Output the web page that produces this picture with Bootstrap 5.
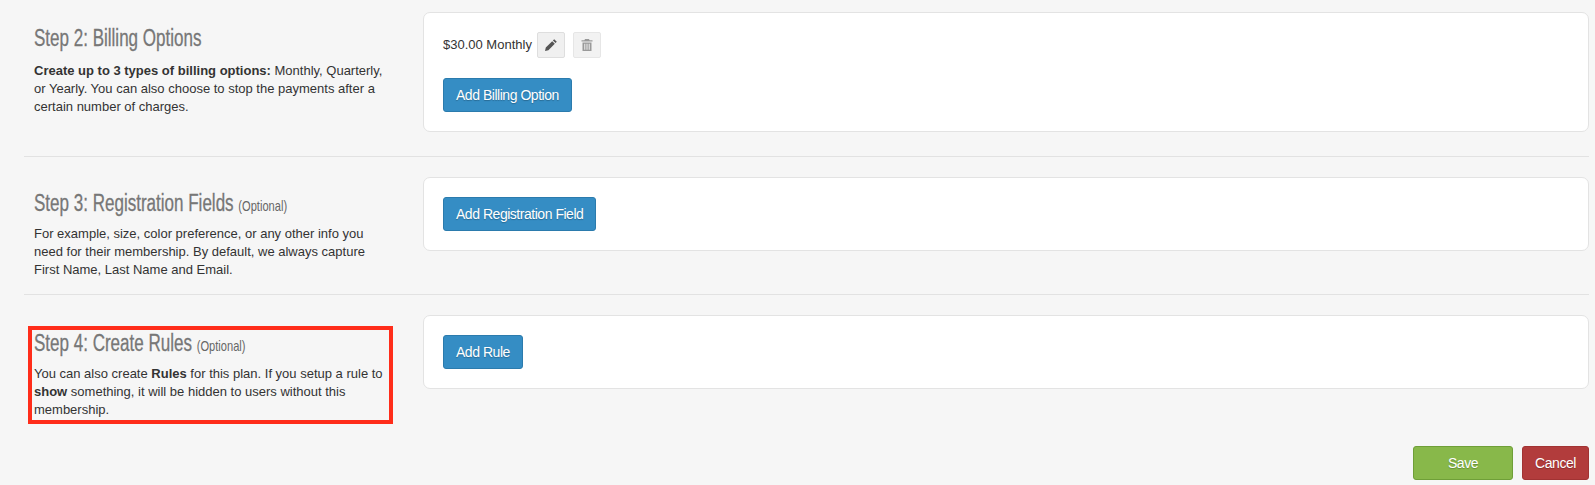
<!DOCTYPE html>
<html lang="en">
<head>
<meta charset="utf-8">
<title>Plan steps</title>
<link href="https://cdn.jsdelivr.net/npm/bootstrap@5.3.0/dist/css/bootstrap.min.css" rel="stylesheet">
<style>
body{background:#f6f6f6;color:#333;font-family:"Liberation Sans",Arial,sans-serif;font-size:13px;line-height:18px}
.page-wrap{padding:12px 6px 0 24px}
.step-info{width:399px;flex:none;padding:14px 37px 14px 10px}
.step-info p{margin:0}
.step-info.tight{padding-bottom:15px}
.step-title{font-family:"Liberation Sans",sans-serif;font-size:23px;line-height:24px;height:24px;color:#777;margin:0 0 12px;font-weight:400;white-space:nowrap;transform:scaleX(.74);transform-origin:left center;-webkit-text-stroke:.3px #777}
.tight .step-title{margin-bottom:10px}
.step-title small{font-size:15px;line-height:1;color:#666;-webkit-text-stroke:0}
.step-main{flex:1;min-width:0}
.step-main.first{padding-bottom:24px}
.step-card{border:1px solid #e3e3e3;border-radius:7px;background:#fff;padding:19px 19px}
.first .step-card{padding-bottom:19px}
.step-rule{border:0;border-top:1px solid #e2e2e2;margin:0 0 20px;opacity:1}
.note-box{border:4px solid #ff2d1a;margin:-3px -7px 0 -6px;padding:1px 0 1px 2px}
.note-box .step-title{margin-bottom:10px}
.act{font-family:"Liberation Sans",Arial,sans-serif;font-size:14px;line-height:20px;height:34px;padding:6px 12px;border-radius:3px;color:#fff;text-shadow:0 1px 1px rgba(0,0,0,.25);letter-spacing:-.47px}
.act-blue{background:#358dc4;border:1px solid #2b7bad}
.act-save{background:#88b84a;border:1px solid #6f9f38;width:100px}
.act-cancel{background:#b23c3c;border:1px solid #a13333;width:67px}
.price-row{height:26px;margin-top:0;margin-bottom:20px}
.tool{width:28px;height:26px;padding:0;border-radius:2px;background:#f0f0f0;border:1px solid #dedede}
.tool svg{display:block;margin:auto}
.tool-off{background:#f2f2f2;border-color:#e6e6e6;margin-left:8px}
.price-label{margin-right:5px}
.foot-bar{margin-top:22px;gap:9px}
</style>
</head>
<body>
<div class="page-wrap">
  <div class="d-flex">
    <div class="step-info">
      <h4 class="step-title">Step 2: Billing Options</h4>
      <p><strong>Create up to 3 types of billing options:</strong> Monthly, Quarterly, or Yearly. You can also choose to stop the payments after a certain number of charges.</p>
    </div>
    <div class="step-main first">
      <div class="card step-card">
        <div class="d-flex align-items-center price-row">
          <span class="price-label">$30.00 Monthly</span>
          <button type="button" class="btn tool" aria-label="Edit"><svg width="14" height="14" viewBox="0 0 14 14"><path fill="#555" d="M10.200 1.200 12.800 3.800 11.500 5.100 8.900 2.500ZM8.200 3.200 10.800 5.800 4.400 12.200 1 13 1.800 9.600Z"/></svg></button>
          <button type="button" class="btn tool tool-off" aria-label="Delete"><svg width="14" height="14" viewBox="0 0 14 14"><path fill="#999" fill-rule="evenodd" d="M5 1h4l.6 1.200H12.500v1.300h-11V2.200h2.900ZM2.500 4.500h9V13h-9ZM4.300 5.800v5.900h1V5.800Zm2.200 0v5.900h1V5.800Zm2.200 0v5.900h1V5.800Z"/></svg></button>
        </div>
        <div><button type="button" class="btn act act-blue">Add Billing Option</button></div>
      </div>
    </div>
  </div>
  <hr class="step-rule">
  <div class="d-flex">
    <div class="step-info tight">
      <h4 class="step-title">Step 3: Registration Fields <small>(Optional)</small></h4>
      <p>For example, size, color preference, or any other info you need for their membership. By default, we always capture First Name, Last Name and Email.</p>
    </div>
    <div class="step-main">
      <div class="card step-card">
        <div><button type="button" class="btn act act-blue">Add Registration Field</button></div>
      </div>
    </div>
  </div>
  <hr class="step-rule">
  <div class="d-flex">
    <div class="step-info pb-0">
      <div class="note-box">
        <h4 class="step-title">Step 4: Create Rules <small>(Optional)</small></h4>
        <p>You can also create <strong>Rules</strong> for this plan. If you setup a rule to <strong>show</strong> something, it will be hidden to users without this membership.</p>
      </div>
    </div>
    <div class="step-main">
      <div class="card step-card">
        <div><button type="button" class="btn act act-blue">Add Rule</button></div>
      </div>
    </div>
  </div>
  <div class="d-flex justify-content-end foot-bar">
    <button type="button" class="btn act act-save">Save</button>
    <button type="button" class="btn act act-cancel">Cancel</button>
  </div>
</div>
<script src="https://cdn.jsdelivr.net/npm/bootstrap@5.3.0/dist/js/bootstrap.bundle.min.js"></script>
</body>
</html>
